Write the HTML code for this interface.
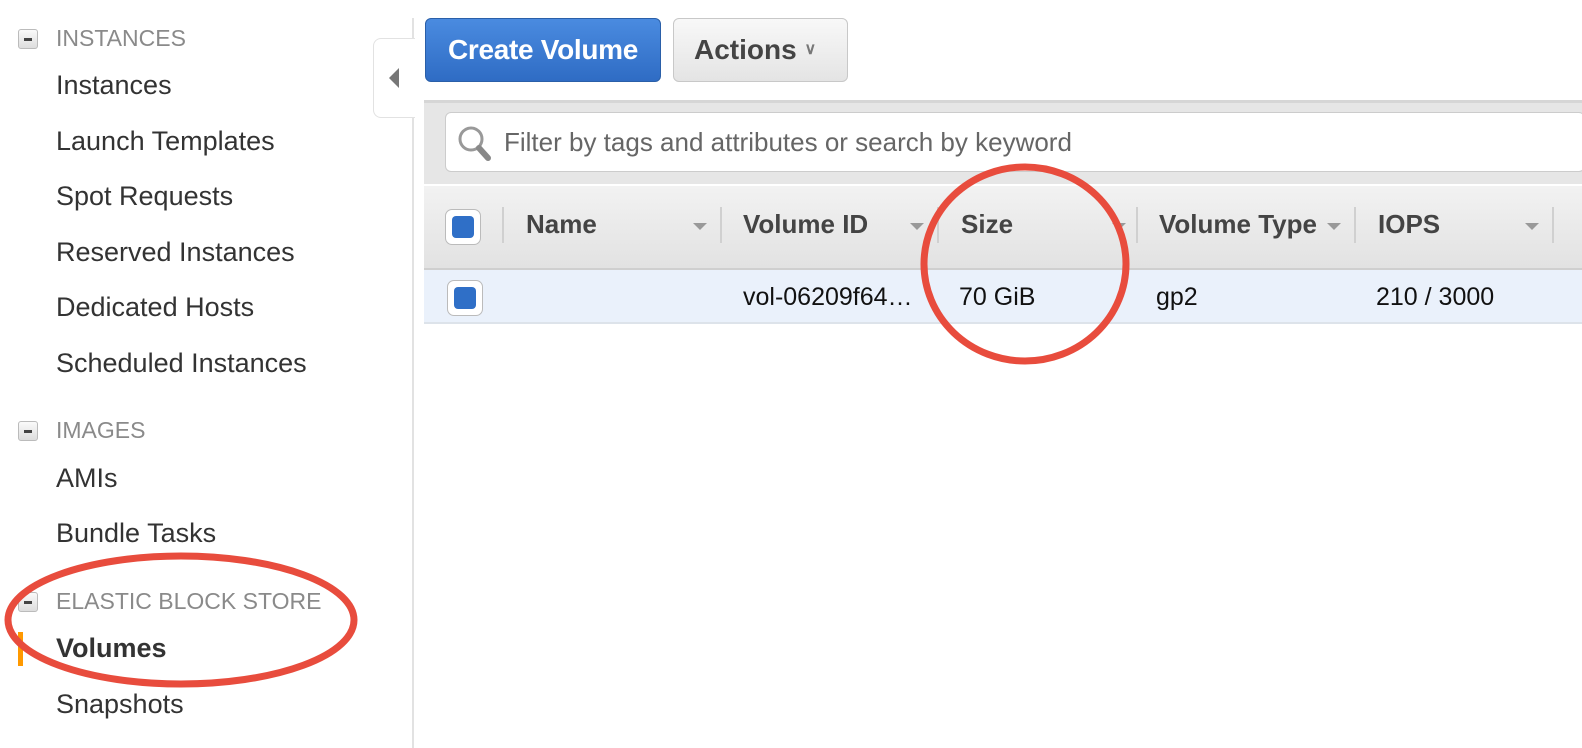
<!DOCTYPE html>
<html><head><style>
body{margin:0;width:1582px;height:748px;overflow:hidden;background:#fff;font-family:"Liberation Sans",Arial,sans-serif;position:relative}
.a{position:absolute}
.sec{color:#8a8a8a;font-size:23px;left:56px}
.box{left:18px;width:20px;height:20px;border:1px solid #bbb;border-radius:3px;background:linear-gradient(#fafafa,#ddd);box-sizing:border-box}
.box:after{content:"";position:absolute;left:5px;top:8px;width:8px;height:3px;background:#444}
.it{left:56px;font-size:27px;color:#333}
.hd{font-weight:bold;font-size:26px;color:#444;top:209px}
.sep{width:2px;height:36px;background:#d0d0d0;top:207px}
.tri{width:0;height:0;border-left:7px solid transparent;border-right:7px solid transparent;border-top:7px solid #999;top:223px}
.cb{width:36px;height:36px;border:1px solid #bbb;border-radius:7px;background:#fff;box-sizing:border-box}
.cb:after{content:"";position:absolute;left:6px;top:6px;width:22px;height:22px;border-radius:4px;background:#2f6fc7}
.cell{font-size:25px;color:#111;top:283px}
</style></head><body>
<div class="a box" style="top:29px"></div><div class="a sec" style="top:25px">INSTANCES</div>
<div class="a it" style="top:70px">Instances</div>
<div class="a it" style="top:126px">Launch Templates</div>
<div class="a it" style="top:181px">Spot Requests</div>
<div class="a it" style="top:237px">Reserved Instances</div>
<div class="a it" style="top:292px">Dedicated Hosts</div>
<div class="a it" style="top:348px">Scheduled Instances</div>
<div class="a box" style="top:421px"></div><div class="a sec" style="top:417px">IMAGES</div>
<div class="a it" style="top:463px">AMIs</div>
<div class="a it" style="top:518px">Bundle Tasks</div>
<div class="a box" style="top:592px"></div><div class="a sec" style="top:588px">ELASTIC BLOCK STORE</div>
<div class="a" style="left:18px;top:632px;width:5px;height:34px;background:#f90"></div>
<div class="a it" style="top:633px;font-weight:bold">Volumes</div>
<div class="a it" style="top:689px">Snapshots</div>
<div class="a" style="left:412px;top:18px;width:2px;height:730px;background:#e2e2e2"></div>
<div class="a" style="left:373px;top:38px;width:41px;height:78px;border:1px solid #e2e2e2;border-right:none;border-radius:8px 0 0 8px;background:#fff"></div>
<div class="a" style="left:389px;top:68px;width:0;height:0;border-top:10px solid transparent;border-bottom:10px solid transparent;border-right:10px solid #777"></div>
<div class="a" style="left:425px;top:18px;width:236px;height:64px;box-sizing:border-box;border:1px solid #2a5fa8;border-radius:6px;background:linear-gradient(#4a8be0,#2f6cc4);color:#fff;font-weight:bold;font-size:28px;text-align:center;line-height:62px;letter-spacing:-0.3px">Create Volume</div>
<div class="a" style="left:673px;top:18px;width:175px;height:64px;box-sizing:border-box;border:1px solid #c8c8c8;border-radius:6px;background:linear-gradient(#f8f8f8,#e4e4e4);color:#444;font-weight:bold;font-size:28px;line-height:62px;padding-left:20px">Actions <span style="font-size:16px;color:#777;vertical-align:5px">&#8744;</span></div>
<div class="a" style="left:424px;top:100px;width:1158px;height:84px;background:#e6e6e6;border-top:3px solid #d6d6d6;box-sizing:border-box"></div>
<div class="a" style="left:445px;top:112px;width:1140px;height:60px;background:#fff;border:1px solid #ccc;border-radius:6px;box-sizing:border-box"></div>
<svg class="a" style="left:456px;top:124px" width="38" height="40"><circle cx="15" cy="15" r="11" fill="none" stroke="#999" stroke-width="3"/><line x1="23" y1="24" x2="32" y2="34" stroke="#888" stroke-width="6" stroke-linecap="round"/></svg>
<div class="a" style="left:504px;top:127px;font-size:26px;color:#666">Filter by tags and attributes or search by keyword</div>
<div class="a" style="left:424px;top:186px;width:1158px;height:84px;background:linear-gradient(#f2f2f2,#e2e2e2);border-bottom:2px solid #cfcfcf;box-sizing:border-box"></div>
<div class="a cb" style="left:445px;top:209px"></div>
<div class="a sep" style="left:502px"></div>
<div class="a hd" style="left:526px">Name</div><div class="a tri" style="left:693px"></div>
<div class="a sep" style="left:720px"></div>
<div class="a hd" style="left:743px">Volume ID</div><div class="a tri" style="left:910px"></div>
<div class="a sep" style="left:937px"></div>
<div class="a hd" style="left:961px">Size</div><div class="a tri" style="left:1112px"></div>
<div class="a sep" style="left:1136px"></div>
<div class="a hd" style="left:1159px">Volume Type</div><div class="a tri" style="left:1327px"></div>
<div class="a sep" style="left:1354px"></div>
<div class="a hd" style="left:1378px">IOPS</div><div class="a tri" style="left:1525px"></div>
<div class="a sep" style="left:1552px"></div>
<div class="a" style="left:424px;top:270px;width:1158px;height:54px;background:#eaf1fb;border-bottom:2px solid #dde3ea;box-sizing:border-box"></div>
<div class="a cb" style="left:447px;top:280px"></div>
<div class="a cell" style="left:743px">vol-06209f64…</div>
<div class="a cell" style="left:959px">70 GiB</div>
<div class="a cell" style="left:1156px">gp2</div>
<div class="a cell" style="left:1376px">210 / 3000</div>
<svg class="a" style="left:0;top:0" width="1582" height="748"><ellipse cx="1025" cy="264" rx="101" ry="97" fill="none" stroke="#e84c3d" stroke-width="7"/><ellipse cx="181" cy="620" rx="173" ry="64" fill="none" stroke="#e84c3d" stroke-width="7"/></svg>
</body></html>
